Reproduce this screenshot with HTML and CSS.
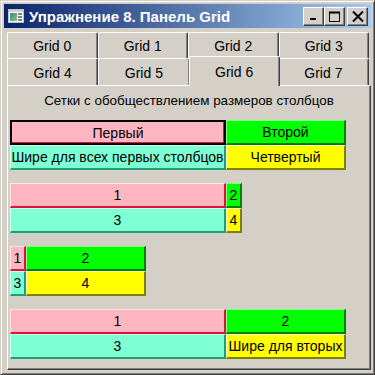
FILE: index.html
```html
<!DOCTYPE html>
<html lang="ru">
<head>
  <meta charset="UTF-8">
  <title>Упражнение 8. Панель Grid</title>
  <link rel="stylesheet" href="styles.css">
</head>
<body>
  <div class="window">
    <div class="titlebar">
      <svg class="app-icon" width="16" height="14" viewBox="0 0 16 14">
        <rect x="0.5" y="0.5" width="15" height="13" fill="#fff" stroke="#c0c0c0"/>
        <rect x="1" y="1" width="14" height="2" fill="#d4d0c8"/>
        <defs>
          <linearGradient id="ig" x1="0" y1="0" x2="1" y2="1">
            <stop offset="0" stop-color="#3c8c8c"/>
            <stop offset="1" stop-color="#7cc47c"/>
          </linearGradient>
        </defs>
        <rect x="2" y="4" width="7" height="8" fill="url(#ig)"/>
        <rect x="10" y="4" width="4" height="2" fill="#808080"/>
        <rect x="10" y="7" width="4" height="2" fill="#808080"/>
        <rect x="10" y="10" width="4" height="2" fill="#808080"/>
      </svg>
      <span class="title">Упражнение 8. Панель Grid</span>
      <div class="caption-btns">
        <div class="cbtn">
          <svg width="10" height="10" viewBox="0 0 10 10"><rect x="1" y="7" width="6" height="2" fill="#000"/></svg>
        </div>
        <div class="cbtn">
          <svg width="12" height="11" viewBox="0 0 12 11"><path d="M0.5 1.5h10v9h-10z" fill="none" stroke="#000"/><rect x="0" y="0.5" width="11" height="2" fill="#000"/></svg>
        </div>
        <div class="cbtn close">
          <svg width="12" height="11" viewBox="0 0 12 11"><path d="M1 0.5 L11 10.5 M11 0.5 L1 10.5" stroke="#000" stroke-width="2"/></svg>
        </div>
      </div>
    </div>

    <div class="tabctl">
      <div class="tab-row">
        <div class="tab">Grid 0</div>
        <div class="tab">Grid 1</div>
        <div class="tab">Grid 2</div>
        <div class="tab">Grid 3</div>
      </div>
      <div class="tab-row">
        <div class="tab">Grid 4</div>
        <div class="tab">Grid 5</div>
        <div class="tab active">Grid 6</div>
        <div class="tab">Grid 7</div>
      </div>
      <div class="panel">
        <div class="heading">Сетки с обобществлением размеров столбцов</div>

        <div class="grid g-wide-wide">
          <div class="cell pink focus">Первый</div>
          <div class="cell lime">Второй</div>
          <div class="cell aqua">Шире для всех первых столбцов</div>
          <div class="cell yellow">Четвертый</div>
        </div>

        <div class="grid g-wide-narrow">
          <div class="cell pink">1</div>
          <div class="cell lime">2</div>
          <div class="cell aqua">3</div>
          <div class="cell yellow">4</div>
        </div>

        <div class="grid g-narrow-wide">
          <div class="cell pink">1</div>
          <div class="cell lime">2</div>
          <div class="cell aqua">3</div>
          <div class="cell yellow">4</div>
        </div>

        <div class="grid g-wide-wide">
          <div class="cell pink">1</div>
          <div class="cell lime">2</div>
          <div class="cell aqua">3</div>
          <div class="cell yellow">Шире для вторых</div>
        </div>
      </div>
    </div>
  </div>
</body>
</html>
```

FILE: styles.css
```css
* { margin: 0; padding: 0; box-sizing: border-box; }

body {
  background: #d4d0c8;
  font-family: "Liberation Sans", Arial, sans-serif;
  font-size: 13px;
  color: #000;
}

/* Window frame */
.window {
  width: 375px;
  height: 375px;
  background: #d4d0c8;
  border: 1px solid;
  border-color: #d4d0c8 #404040 #404040 #d4d0c8;
  box-shadow: inset 1px 1px #fff, inset -1px -1px #808080;
  padding: 3px;
}

.titlebar {
  height: 24px;
  display: flex;
  align-items: center;
  background: linear-gradient(to right, #0a246a, #a6caf0);
  padding-left: 4px;
  padding-right: 3px;
}

.app-icon { flex: none; }

.title {
  margin-left: 5px;
  color: #fff;
  font-weight: bold;
  font-size: 15px;
  flex: 1;
  white-space: nowrap;
}

.caption-btns {
  display: flex;
  gap: 0;
}

.cbtn {
  width: 21px;
  height: 19px;
  background: #d4d0c8;
  border: 1px solid;
  border-color: #fff #404040 #404040 #fff;
  box-shadow: inset -1px -1px #808080;
  display: flex;
  align-items: center;
  justify-content: center;
}

.cbtn.close { margin-left: 2px; }

/* Tabs */
.tabctl {
  margin: 4px 0 0 3px;
}

.tab-row {
  display: flex;
  margin-right: 2px;
}

.tab-row:first-child .tab { height: 26px; }

.tab {
  flex: 1;
  height: 27px;
  display: flex;
  align-items: center;
  justify-content: center;
  font-size: 14px;
  border-top: 1px solid #fff;
  border-left: 1px solid #fff;
  border-right: 1px solid #404040;
  box-shadow: inset -1px 0 #808080;
  border-radius: 2px 2px 0 0;
  padding-top: 1px;
}

.tab.active {
  position: relative;
  z-index: 1;
  height: 30px;
  margin: -2px -2px -1px -1px;
  background: #d4d0c8;
  padding-top: 0;
}

.panel {
  height: 285px;
  border: 1px solid;
  border-color: #fff #404040 #404040 #fff;
  box-shadow: inset -1px -1px #808080;
  padding: 0 2px;
  display: flex;
  flex-direction: column;
}

.heading {
  text-align: center;
  font-size: 13.4px;
  line-height: 16px;
  margin-top: 7px;
  margin-bottom: 11px;
}

/* Grids with shared column sizes */
.grid {
  display: grid;
  grid-template-rows: 25px 25px;
  margin-bottom: 13px;
}

.g-wide-wide { grid-template-columns: 216px 120px; }
.g-wide-narrow { grid-template-columns: 216px 16px; }
.g-narrow-wide { grid-template-columns: 16px 120px; }

.cell {
  display: flex;
  align-items: center;
  justify-content: center;
  font-size: 14px;
  white-space: nowrap;
  overflow: hidden;
  border: 2px solid;
  border-width: 1px 2px 2px 1px;
}

.pink { background: #ffb6c1; border-color: #ffe4ea #dc143c #dc143c #ffe4ea; }
.lime { background: #00ff00; border-color: #80ff80 #008000 #008000 #80ff80; }
.aqua { background: #7fffd4; border-color: #c8fff0 #20a070 #20a070 #c8fff0; }
.yellow { background: #ffff00; border-color: #ffffc0 #808000 #808000 #ffffc0; }

.pink.focus {
  border: 2px solid #000;
  box-shadow: inset 0 -1px #dc143c, inset -1px 0 #dc143c;
}
```
